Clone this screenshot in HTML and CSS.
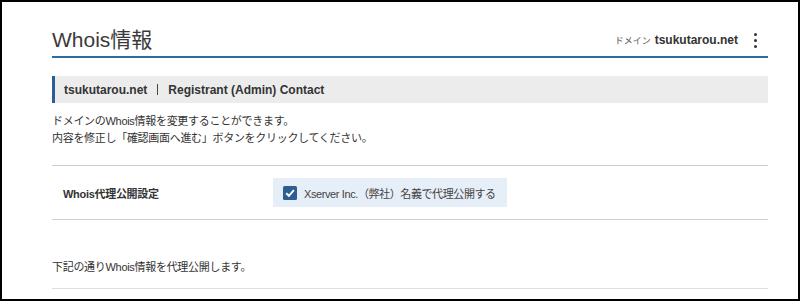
FILE: index.html
```html
<!DOCTYPE html>
<html lang="ja">
<head>
    <meta charset="UTF-8">
    <meta name="viewport" content="width=device-width, initial-scale=1.0">
    <title>Whois情報</title>
    <link rel="stylesheet" href="styles.css">
</head>
<body>
    <div class="frame">
        <div class="page-head">
            <h1 class="page-title">Whois情報</h1>
            <div class="head-domain">
                <span class="head-label">ドメイン</span>
                <span class="head-name">tsukutarou.net</span>
                <span class="kebab"><i></i><i></i><i></i></span>
            </div>
        </div>

        <h2 class="section-bar">tsukutarou.net<span class="sep"></span>Registrant (Admin) Contact</h2>

        <p class="lead">
            ドメインのWhois情報を変更することができます。<br>
            内容を修正し「確認画面へ進む」ボタンをクリックしてください。
        </p>

        <div class="form-row">
            <div class="form-label">Whois代理公開設定</div>
            <div class="form-field">
                <label class="check-box">
                    <span class="check">
                        <svg width="14" height="14" viewBox="0 0 14 14">
                            <rect width="14" height="14" rx="1.5" fill="#2b5f93"/>
                            <path d="M3.2 7.2 L5.9 9.8 L10.9 4.2" fill="none" stroke="#fff" stroke-width="2"/>
                        </svg>
                    </span>
                    Xserver Inc.（弊社）名義で代理公開する
                </label>
            </div>
        </div>

        <p class="note">下記の通りWhois情報を代理公開します。</p>
    </div>
</body>
</html>
```

FILE: styles.css
```css
html, body {
    margin: 0;
    padding: 0;
}

body {
    background: #fff;
    color: #333;
    font-family: "Liberation Sans", "Noto Sans CJK JP", sans-serif;
}

.frame {
    box-sizing: border-box;
    height: 301px;
    border: 2px solid #000;
    padding: 0 30px 0 50px;
    overflow: hidden;
}

.page-head {
    display: flex;
    justify-content: space-between;
    align-items: center;
    padding: 24px 0 2px;
    border-bottom: 2px solid #2f6aa3;
}

.page-title {
    margin: 0;
    font-size: 21px;
    font-weight: normal;
    line-height: 28px;
    color: #3a3a3a;
}

.head-domain {
    display: flex;
    align-items: center;
    margin-right: 11px;
}

.head-label {
    font-size: 9px;
    color: #555;
    margin-right: 4px;
}

.head-name {
    font-size: 12px;
    font-weight: bold;
    color: #333;
}

.kebab {
    display: flex;
    flex-direction: column;
    gap: 3px;
    margin-left: 16px;
}

.kebab i {
    display: block;
    width: 3px;
    height: 3px;
    border-radius: 50%;
    background: #333;
}

.section-bar {
    display: flex;
    align-items: center;
    margin: 18px 0 0;
    height: 27px;
    padding-left: 9px;
    border-left: 3px solid #2b5f93;
    background: #ececec;
    font-size: 12px;
    font-weight: bold;
    color: #333;
}

.sep {
    display: inline-block;
    width: 1px;
    height: 11px;
    margin: 0 10px;
    background: #444;
}

.lead {
    margin: 10px 0 0;
    font-size: 11px;
    line-height: 17px;
    letter-spacing: -0.3px;
}

.form-row {
    display: flex;
    align-items: center;
    margin-top: 18px;
    height: 53px;
    border-top: 1px solid #cfcfcf;
    border-bottom: 1px solid #cfcfcf;
}

.form-label {
    width: 210px;
    padding-left: 11px;
    font-size: 11px;
    font-weight: bold;
    letter-spacing: -0.3px;
}

.check-box {
    display: flex;
    align-items: center;
    gap: 7px;
    width: 214px;
    height: 29px;
    padding: 0 10px;
    background: #e6eef7;
    font-size: 11px;
    color: #444;
    white-space: nowrap;
    letter-spacing: -0.4px;
}

.check {
    display: flex;
}

.note {
    margin: 39px 0 0;
    padding-bottom: 12px;
    font-size: 11px;
    line-height: 17px;
    letter-spacing: -0.3px;
    border-bottom: 1px solid #d9e0ea;
}
```
